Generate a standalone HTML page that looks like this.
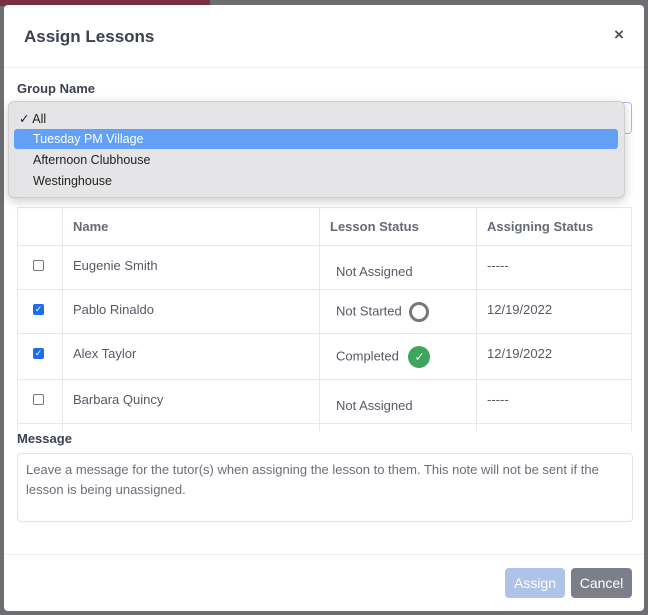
<!DOCTYPE html><html><head><style>
body{margin:0;width:648px;height:615px;background:#6e6e70;position:relative;overflow:hidden;font-family:"Liberation Sans",sans-serif;}
.a{position:absolute}
.m{left:4px;top:5px;width:640px;height:606px;background:#fff;border-radius:4px}
.bd{border:1px solid #e6e6ee}
.cb{width:9px;height:9px;border:1px solid #777;border-radius:2px;background:#fff}
.ck{width:11px;height:11px;border-radius:2px;background:#1a6ef0;color:#fff;font-size:9px;line-height:11px;text-align:center}
td{box-sizing:border-box}
</style></head><body>
<div class="a" style="left:0;top:0;width:210px;height:6px;background:#7a3040"></div>
<div class="a m"></div>
<div class="a" style="left:24px;top:27px;font-size:17px;font-weight:bold;color:#3c4050">Assign Lessons</div>
<div class="a" style="left:614px;top:25px;font-size:17px;font-weight:bold;color:#555">×</div>
<div class="a" style="left:4px;top:67px;width:640px;height:1px;background:#eee"></div>
<div class="a" style="left:17px;top:81px;font-size:13px;font-weight:bold;color:#3c4050">Group Name</div>
<div class="a" style="left:17px;top:102px;width:613px;height:30px;border:1px solid #a8b8f0;border-radius:4px"></div>
<div class="a" style="left:17px;top:207px;width:616px;height:224px;overflow:hidden">
<table style="border-collapse:collapse;width:614px;table-layout:fixed;font-size:13px;color:#555a66">
<colgroup><col style="width:45px"><col style="width:257px"><col style="width:157px"><col style="width:155px"></colgroup>
<tr style="height:38px;font-weight:bold;color:#666a78"><td class="bd"></td><td class="bd" style="padding-left:10px">Name</td><td class="bd" style="padding-left:10px">Lesson Status</td><td class="bd" style="padding-left:10px">Assigning Status</td></tr>
<tr style="height:44px"><td class="bd" style="vertical-align:top;padding:14px 0 0 15px"><div class="cb"></div></td><td class="bd" style="vertical-align:top;padding:12px 10px">Eugenie Smith</td><td class="bd" style="padding:8px 16px 0">Not Assigned</td><td class="bd" style="vertical-align:top;padding:12px 10px">-----</td></tr>
<tr style="height:44px"><td class="bd" style="vertical-align:top;padding:14px 0 0 15px"><div class="ck">✓</div></td><td class="bd" style="vertical-align:top;padding:12px 10px">Pablo Rinaldo</td><td class="bd" style="padding:0 16px">Not Started <span style="display:inline-block;width:14px;height:14px;border:3px solid #777;border-radius:50%;vertical-align:middle;margin-left:4px"></span></td><td class="bd" style="vertical-align:top;padding:12px 10px">12/19/2022</td></tr>
<tr style="height:46px"><td class="bd" style="vertical-align:top;padding:14px 0 0 15px"><div class="ck">✓</div></td><td class="bd" style="vertical-align:top;padding:12px 10px">Alex Taylor</td><td class="bd" style="padding:0 16px">Completed <span style="display:inline-block;width:22px;height:22px;background:#3da55c;border-radius:50%;vertical-align:middle;margin-left:6px;color:#fff;text-align:center;line-height:22px;font-size:12px">✓</span></td><td class="bd" style="vertical-align:top;padding:12px 10px">12/19/2022</td></tr>
<tr style="height:44px"><td class="bd" style="vertical-align:top;padding:14px 0 0 15px"><div class="cb"></div></td><td class="bd" style="vertical-align:top;padding:12px 10px">Barbara Quincy</td><td class="bd" style="padding:8px 16px 0">Not Assigned</td><td class="bd" style="vertical-align:top;padding:12px 10px">-----</td></tr>
<tr style="height:30px"><td class="bd"></td><td class="bd"></td><td class="bd"></td><td class="bd"></td></tr>
</table></div>
<div class="a" style="left:17px;top:431px;font-size:13px;font-weight:bold;color:#3c4050">Message</div>
<div class="a" style="left:17px;top:453px;width:598px;height:55px;border:1px solid #e2e2e8;border-radius:4px;padding:6px 8px;font-size:13px;line-height:20px;color:#6a6e7a">Leave a message for the tutor(s) when assigning the lesson to them. This note will not be sent if the lesson is being unassigned.</div>
<div class="a" style="left:4px;top:554px;width:640px;height:1px;background:#eee"></div>
<div class="a" style="left:505px;top:568px;width:60px;height:30px;background:#aec3e8;border-radius:4px;color:#fff;font-size:14px;text-align:center;line-height:30px">Assign</div>
<div class="a" style="left:571px;top:568px;width:61px;height:30px;background:#7c7f8a;border-radius:4px;color:#fff;font-size:14px;text-align:center;line-height:30px">Cancel</div>
<div class="a" style="left:8px;top:101px;width:615px;height:95px;background:#e5e5e7;border:1px solid #cfcfd2;border-radius:6px;box-shadow:0 3px 10px rgba(0,0,0,.2);font-size:12.5px;color:#222">
<div class="a" style="left:10px;top:9px">✓ All</div>
<div class="a" style="left:5px;top:27px;width:604px;height:20px;background:#63a0f7;border-radius:3px"></div>
<div class="a" style="left:24px;top:30px;color:#fff">Tuesday PM Village</div>
<div class="a" style="left:24px;top:51px">Afternoon Clubhouse</div>
<div class="a" style="left:24px;top:72px">Westinghouse</div>
</div>
</body></html>
